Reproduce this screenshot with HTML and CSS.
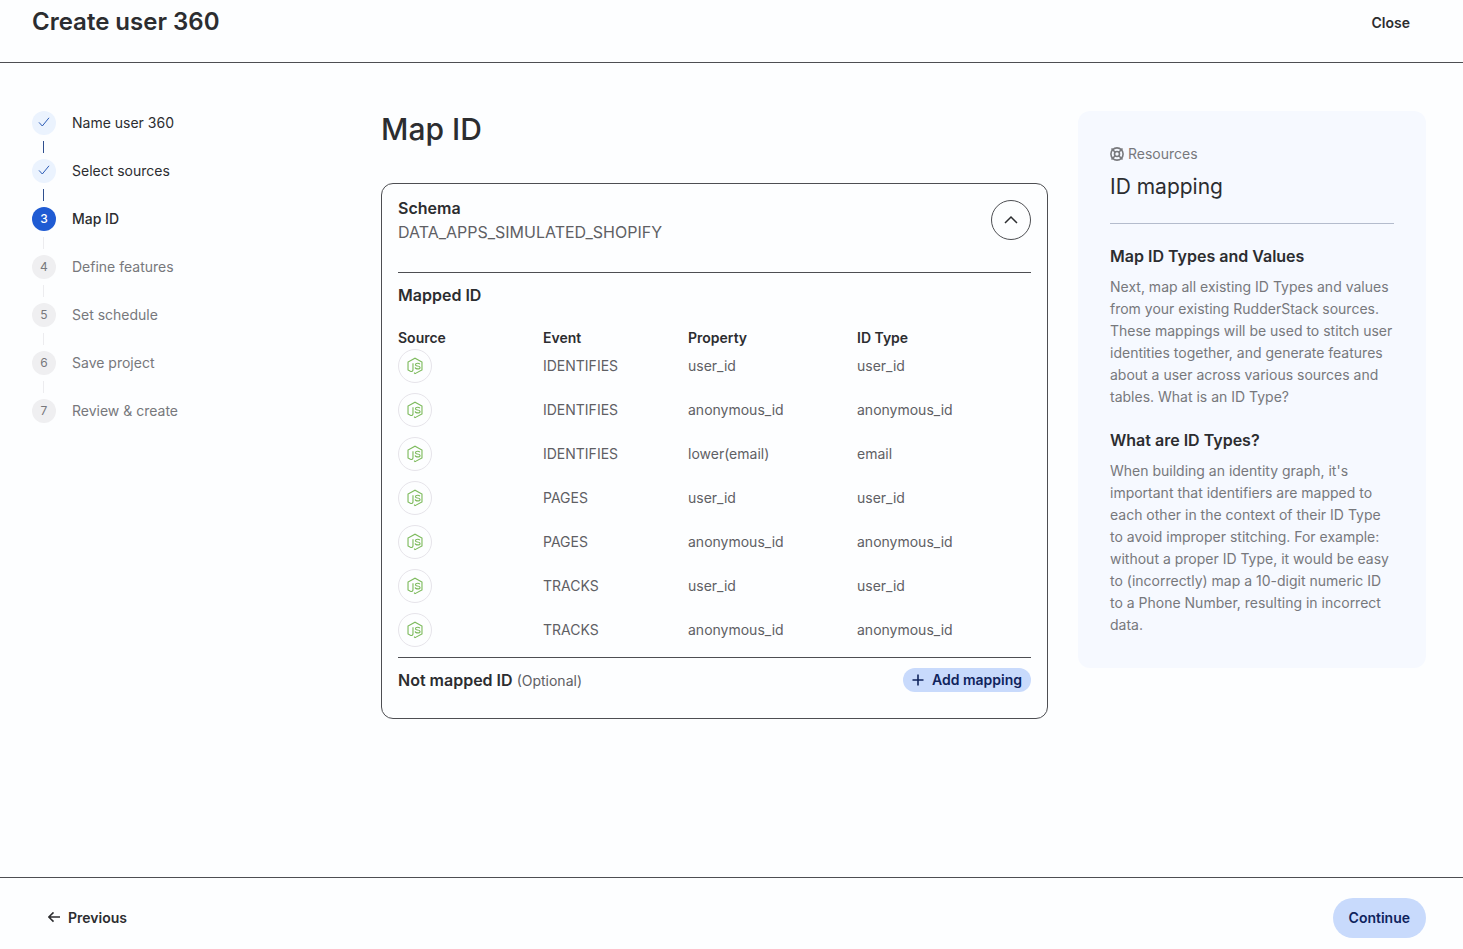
FILE: index.html
```html
<!DOCTYPE html>
<html lang="en">
<head>
  <meta charset="UTF-8">
  <title>Create user 360</title>
  <meta name="viewport" content="width=device-width, initial-scale=1.0">
  <link rel="stylesheet" href="styles.css">
</head>
<body>
  <!-- Node.js logo, reused in every source cell -->
  <svg class="sprite" aria-hidden="true">
    <symbol id="nodejs" viewBox="0 0 16 16">
      <path d="M7.2 13.9 8 14.8 14.2 11.5V4.5L8 1.1 1.8 4.5V11.5L3.9 12.7C5.2 13.3 6.2 12.6 6.2 11.4V5.6"/>
      <path d="M12.3 6.5C12 5.8 11.3 5.6 10.3 5.6 9.1 5.6 8.4 6 8.4 6.8 8.4 7.7 9.2 7.8 10.4 8 11.8 8.2 12.5 8.4 12.5 9.3 12.5 10.2 11.7 10.6 10.5 10.6 9.1 10.6 8.3 10.2 8.2 9.2"/>
    </symbol>
  </svg>

  <header class="header">
    <h1 class="header-title">Create user 360</h1>
    <button type="button" class="btn-text">Close</button>
  </header>

  <main class="main">
    <ol class="steps">
      <li class="step done">
        <span class="step-icon"><svg width="12" height="12" viewBox="0 0 12 12"><path d="M1 5.4 4.3 9 11 0.8"/></svg></span>
        <span>Name user 360</span>
      </li>
      <li class="step done">
        <span class="step-icon"><svg width="12" height="12" viewBox="0 0 12 12"><path d="M1 5.4 4.3 9 11 0.8"/></svg></span>
        <span>Select sources</span>
      </li>
      <li class="step active" aria-current="step"><span class="step-icon">3</span><span>Map ID</span></li>
      <li class="step"><span class="step-icon">4</span><span>Define features</span></li>
      <li class="step"><span class="step-icon">5</span><span>Set schedule</span></li>
      <li class="step"><span class="step-icon">6</span><span>Save project</span></li>
      <li class="step"><span class="step-icon">7</span><span>Review &amp; create</span></li>
    </ol>

    <section class="content">
      <h2 class="content-title">Map ID</h2>
      <div class="card">
        <div class="card-head">
          <div>
            <h3 class="label">Schema</h3>
            <p class="schema">DATA_APPS_SIMULATED_SHOPIFY</p>
          </div>
          <button type="button" class="btn-round" aria-label="Collapse">
            <svg width="16" height="16" viewBox="0 0 16 16"><path d="M2 11 8 5l6 6"/></svg>
          </button>
        </div>

        <div class="card-body">
          <h3 class="label">Mapped ID</h3>
          <table class="table">
            <thead>
              <tr><th class="col-source">Source</th><th class="col-event">Event</th><th class="col-property">Property</th><th>ID Type</th></tr>
            </thead>
            <tbody>
              <tr><td><span class="source"><svg><use href="#nodejs"/></svg></span></td><td>IDENTIFIES</td><td>user_id</td><td>user_id</td></tr>
              <tr><td><span class="source"><svg><use href="#nodejs"/></svg></span></td><td>IDENTIFIES</td><td>anonymous_id</td><td>anonymous_id</td></tr>
              <tr><td><span class="source"><svg><use href="#nodejs"/></svg></span></td><td>IDENTIFIES</td><td>lower(email)</td><td>email</td></tr>
              <tr><td><span class="source"><svg><use href="#nodejs"/></svg></span></td><td>PAGES</td><td>user_id</td><td>user_id</td></tr>
              <tr><td><span class="source"><svg><use href="#nodejs"/></svg></span></td><td>PAGES</td><td>anonymous_id</td><td>anonymous_id</td></tr>
              <tr><td><span class="source"><svg><use href="#nodejs"/></svg></span></td><td>TRACKS</td><td>user_id</td><td>user_id</td></tr>
              <tr><td><span class="source"><svg><use href="#nodejs"/></svg></span></td><td>TRACKS</td><td>anonymous_id</td><td>anonymous_id</td></tr>
            </tbody>
          </table>
        </div>

        <div class="card-foot">
          <h3 class="label">Not mapped ID <span class="optional">(Optional)</span></h3>
          <button type="button" class="btn-add">
            <svg width="12" height="12" viewBox="0 0 12 12"><path d="M6 0.5v11M0.5 6h11"/></svg>
            Add mapping
          </button>
        </div>
      </div>
    </section>

    <aside class="resources">
      <div class="resources-head">
        <p class="resources-tag">
          <svg width="14" height="14" viewBox="0 0 14 14">
            <circle cx="7" cy="7" r="6.1"/>
            <circle cx="7" cy="7" r="2.5"/>
            <path d="M1.5 1.5l3.7 3.7M8.8 8.8l3.7 3.7M12.5 1.5 8.8 5.2M5.2 8.8l-3.7 3.7"/>
          </svg>
          Resources
        </p>
        <h2 class="resources-title">ID mapping</h2>
      </div>
      <h3 class="label">Map ID Types and Values</h3>
      <p class="resources-text">Next, map all existing ID Types and values from your existing RudderStack sources. These mappings will be used to stitch user identities together, and generate features about a user across various sources and tables. What is an ID Type?</p>
      <h3 class="label">What are ID Types?</h3>
      <p class="resources-text">When building an identity graph, it's important that identifiers are mapped to each other in the context of their ID Type to avoid improper stitching. For example: without a proper ID Type, it would be easy to (incorrectly) map a 10-digit numeric ID to a Phone Number, resulting in incorrect data.</p>
    </aside>
  </main>

  <footer class="footer">
    <button type="button" class="btn-text">
      <svg width="12" height="12" viewBox="0 0 12 12"><path d="M12 5H1M5.5 0.4 0.8 5l4.7 4.6"/></svg>
      Previous
    </button>
    <button type="button" class="btn-primary">Continue</button>
  </footer>
</body>
</html>
```
FILE: styles.css
```css
* {
  box-sizing: border-box;
}
body {
  margin: 0;
  min-height: 100vh;
  display: flex;
  flex-direction: column;
  background: #fdfeff;
  color: #2c2d30;
  font-family: Inter, "Liberation Sans", sans-serif;
  font-size: 14px;
  line-height: 22px;
}
h1, h2, h3, p, ol {
  margin: 0;
  padding: 0;
}
svg {
  fill: none;
  stroke: currentColor;
  flex-shrink: 0;
}
button {
  font: inherit;
  font-weight: 600;
  color: inherit;
  border: none;
  background: none;
  cursor: pointer;
  display: flex;
  align-items: center;
  gap: 8px;
}
.sprite {
  display: none;
}

/* header */
.header {
  display: flex;
  justify-content: space-between;
  align-items: flex-start;
  padding: 3px 37px 19px 32px;
  border-bottom: 1px solid #4d4e52;
}
.header-title {
  font-size: 24px;
  line-height: 38px;
  font-weight: 600;
}
.btn-text {
  height: 40px;
  padding: 0 16px;
}
.btn-text svg {
  stroke-width: 1.6;
}

/* main */
.main {
  flex: 1;
  display: grid;
  grid-template-columns: 319px 1fr 348px;
  gap: 30px;
  align-items: start;
  padding: 48px 37px 48px 32px;
}

/* steps */
.steps {
  list-style: none;
}
.step {
  display: grid;
  grid-template-columns: 24px 1fr;
  column-gap: 16px;
  line-height: 24px;
  color: #77787c;
}
.step-icon {
  display: flex;
  align-items: center;
  justify-content: center;
  height: 24px;
  border-radius: 50%;
  background: #efeff1;
  font-size: 12px;
}
.step:not(:last-child)::after {
  content: "";
  width: 1px;
  height: 12px;
  margin: 6px 0 6px 11px;
  background: #ececef;
}
.step.done,
.step.active {
  color: #2c2d30;
}
.step.done .step-icon {
  background: #ebf3fe;
  color: #2b5bb5;
}
.step.done:not(:last-child)::after {
  background: #2f4f8f;
}
.step.active {
  font-weight: 500;
}
.step.active .step-icon {
  background: #1f5bd3;
  color: #fff;
}

/* content */
.content-title {
  font-size: 30px;
  line-height: 36px;
  font-weight: 500;
  margin-bottom: 36px;
}
.label {
  font-size: 16px;
  line-height: 24px;
  font-weight: 600;
}
.card {
  padding: 0 16px;
  border: 1px solid #4d4e52;
  border-radius: 12px;
}
.card-head {
  display: flex;
  justify-content: space-between;
  align-items: center;
  padding: 12px 0 28px;
  border-bottom: 1px solid #4d4e52;
}
.schema {
  font-size: 16px;
  line-height: 24px;
  color: #5f6064;
}
.btn-round {
  justify-content: center;
  width: 40px;
  height: 40px;
  padding: 0;
  border: 1px solid #4d4e52;
  border-radius: 50%;
}
.btn-round svg {
  stroke-width: 1.5;
}
.card-body {
  padding-top: 10px;
  border-bottom: 1px solid #4d4e52;
}
.table {
  width: 100%;
  margin-top: 20px;
  table-layout: fixed;
  border-collapse: collapse;
  color: #5f6064;
}
.table th {
  padding: 0;
  text-align: left;
  font-weight: 600;
  color: #2c2d30;
}
.table td {
  padding: 0 0 10px;
}
.col-source,
.col-event {
  width: 145px;
}
.col-property {
  width: 169px;
}
.source {
  display: flex;
  align-items: center;
  justify-content: center;
  width: 34px;
  height: 34px;
  border: 1px solid #e6e4ea;
  border-radius: 50%;
  color: #7dba5c;
}
.source svg {
  width: 18px;
  height: 18px;
}
.card-foot {
  display: flex;
  justify-content: space-between;
  align-items: center;
  padding: 10px 0 26px;
}
.optional {
  font-size: 14px;
  line-height: 20px;
  font-weight: 400;
  color: #5f6064;
}
.btn-add {
  height: 24px;
  padding: 0 9px;
  border-radius: 12px;
  background: #c8dafc;
  color: #0f235c;
}
.btn-add svg {
  stroke-width: 1.6;
}

/* resources */
.resources {
  padding: 32px;
  border-radius: 12px;
  background: #f6f9ff;
}
.resources-head {
  padding-bottom: 20px;
  margin-bottom: 20px;
  border-bottom: 1px solid #b4bccd;
}
.resources-tag {
  display: flex;
  align-items: center;
  gap: 4px;
  margin-bottom: 6px;
  color: #77787c;
}
.resources-tag svg {
  stroke-width: 1.6;
}
.resources-title {
  font-size: 21px;
  line-height: 32px;
  font-weight: 400;
}
.resources-text {
  margin: 8px 0 20px;
  color: #77787c;
}
.resources-text:last-child {
  margin-bottom: 0;
}

/* footer */
.footer {
  display: flex;
  justify-content: space-between;
  padding: 20px 37px 11px 32px;
  border-top: 1px solid #4d4e52;
}
.btn-primary {
  height: 40px;
  padding: 0 16px;
  border-radius: 20px;
  background: #c8dafc;
  color: #0f235c;
}
```
